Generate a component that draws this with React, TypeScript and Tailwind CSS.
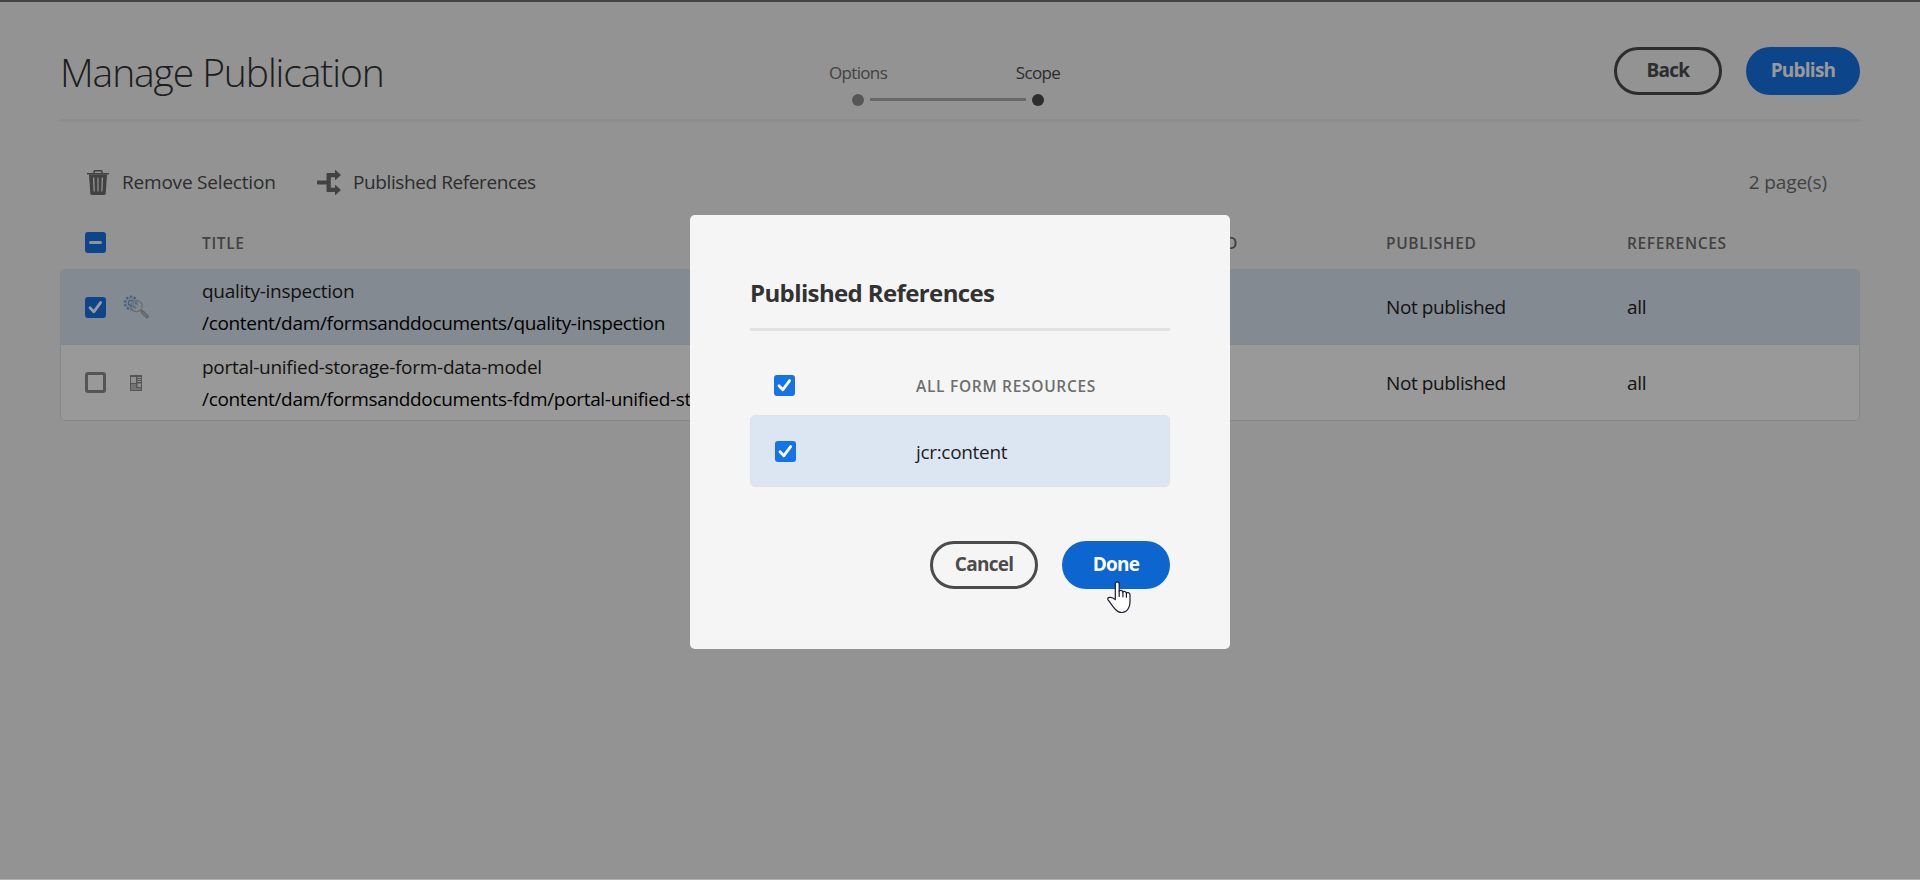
import React from "react";

const rows = [
  {
    title: "quality-inspection",
    path: "/content/dam/formsanddocuments/quality-inspection",
    published: "Not published",
    references: "all",
    selected: true,
  },
  {
    title: "portal-unified-storage-form-data-model",
    path: "/content/dam/formsanddocuments-fdm/portal-unified-storage-form-data-model",
    published: "Not published",
    references: "all",
    selected: false,
  },
];

function Checkbox({ state }: { state: "on" | "off" | "mixed" }) {
  if (state === "off") {
    return <span className="block size-[21px] rounded-[3px] border-3 border-[#8e8e8e]" />;
  }
  return (
    <span className="flex size-[21px] items-center justify-center rounded-[3px] bg-[#1473e6]">
      {state === "mixed" ? (
        <span className="h-[3px] w-[13px] rounded-full bg-[#f5f5f5]" />
      ) : (
        <svg viewBox="0 0 21 21" className="size-[21px]" fill="none">
          <path d="M5 10.8 L8.8 14.8 L15.6 5.6" stroke="white" strokeWidth="2.8" strokeLinecap="round" strokeLinejoin="round" />
        </svg>
      )}
    </span>
  );
}

function TrashIcon() {
  return (
    <svg viewBox="0 0 22 25" className="h-[25px] w-[22px]" fill="#6e6e6e">
      <path d="M0 3h6.3V1.6C6.3.6 7 0 8 0h6c1 0 1.700.6 1.700 1.600V3H22v1.500H0z M7.800 3h6.400V1.500H7.800z" fillRule="evenodd" />
      <path
        d="M2 4.500h18l-1.300 19.100c-.1.800-.6 1.400-1.500 1.400H4.800c-.9 0-1.400-.6-1.500-1.400z M5.900 7.500l.7 14h1.200l-.5-14z M10.400 7.500v14h1.200v-14z M14.700 7.500l-.5 14h1.200l.7-14z"
        fillRule="evenodd"
      />
    </svg>
  );
}

function BranchIcon() {
  return (
    <svg viewBox="0 0 24 25" className="h-[25px] w-6" fill="#6e6e6e">
      <path d="M1 10.500h8.500V4c0-.6.4-1 1-1H18V0.300c0-.3.3-.4.5-.2L24 5l-5.500 5c-.2.200-.5.100-.5-.200V7.200h-4.200v10.600H18v-2.600c0-.3.3-.4.5-.2L24 20l-5.500 4.900c-.2.200-.5.100-.5-.2V22h-7.500c-.6 0-1-.4-1-1v-6.500H1c-.6 0-1-.4-1-1v-2c0-.6.4-1 1-1z" />
    </svg>
  );
}

function InspectIcon() {
  return (
    <svg viewBox="0 0 26 24" className="h-6 w-[26px]" fill="none">
      <circle cx="8" cy="8" r="6.300" stroke="#6f9fd8" strokeWidth="2.200" strokeDasharray="2.200 1.760" />
      <circle cx="8" cy="8" r="5" stroke="#8fb4e0" strokeWidth="0.900" />
      <circle cx="8" cy="8" r="2.600" stroke="#6f9fd8" strokeWidth="1.200" />
      <circle cx="13.500" cy="11" r="5.700" fill="#dce2ea" fillOpacity="0.55" stroke="#b4b8bf" strokeWidth="1.300" />
      <path d="M7.500 10.500 L12.500 12.500 M12.500 7.500 L13.500 10" stroke="#5c93d6" strokeWidth="1.200" strokeDasharray="1.600 1" />
      <path d="M17.500 15 L19.500 17" stroke="#a0a3a8" strokeWidth="1.500" />
      <path d="M19.500 17 L24 21.500" stroke="#a3a6ab" strokeWidth="3.600" strokeLinecap="round" />
      <path d="M19.700 17.200 L23.800 21.300" stroke="#c3c6ca" strokeWidth="1.200" strokeLinecap="round" />
    </svg>
  );
}

function FormIcon() {
  return (
    <svg viewBox="0 0 12 16" className="h-4 w-3">
      <path d="M0 0h12v16H0z" fill="#8e8e8e" />
      <path
        d="M1 2h5v6H1z M7.500 2H11v1H7.500z M7.500 4H11v1H7.500z M7.500 6H11v1H7.500z M7.500 8.500H11V12H7.500z M1 9.500h5v1H1z M1 11.500h5v1H1z M1 13.500h10v1H1z"
        fill="#f2f2f2"
      />
    </svg>
  );
}

function HandCursor() {
  return (
    <svg viewBox="0 0 26 34" className="pointer-events-none absolute top-10 left-[45px] h-[34px] w-[26px]">
      <path
        d="M8.300 3c0-2.800 3.900-2.800 3.900 0v7.200c1.200-1.600 3.300-.8 3.700.9 1.200-1.300 3.100-.7 3.500.9 1.500-1 3.600-.2 3.600 2V21c0 2.500-.5 4.200-1.300 5.800C20.300 29.800 18 31.500 14.700 31.500c-3 0-5-1.600-6.800-3.700C5.500 25 3.500 22 1.200 19.200.5 18.200.6 17 1.600 16.600c2.400-.7 5 .4 6.700 2.100z"
        fill="white"
        stroke="#1b1b2e"
        strokeWidth="1.200"
        strokeLinejoin="round"
      />
      <path d="M12.200 10v5.500 M15.900 11v4.800 M19.400 12v4.200" stroke="#1b1b2e" strokeWidth="1.200" strokeLinecap="round" />
    </svg>
  );
}

export default function App() {
  return (
    <div className="relative h-[880px] w-[1920px] overflow-hidden bg-[#f5f5f5] font-['Open_Sans','Noto_Sans',sans-serif] text-[19px] leading-8 tracking-[-0.32px] text-[#323232]">
      <div className="h-0.5 bg-[#727272]" />
      <div className="px-[60px]">
        <header className="flex h-[120px] items-start justify-between border-b-3 border-[#ececec]">
          <h1 className="w-[740px] pt-[42px] text-[39px] leading-[56px] font-light tracking-[-1.1px]">Manage Publication</h1>
          <div className="flex flex-1 justify-start pt-[57px] text-[17px] leading-7 tracking-[-0.65px]">
            <div className="flex w-[116px] flex-col items-center text-[#6e6e6e]">
              <span>Options</span>
              <span className="mt-[7px] size-3 rounded-full bg-[#909090]" />
            </div>
            <span className="mx-[-46px] mt-[39px] h-[3px] w-[156px] bg-[#b0b0b0]" />
            <div className="flex w-[116px] flex-col items-center text-[#4b4b4b]">
              <span>Scope</span>
              <span className="mt-[7px] size-3 rounded-full bg-[#4b4b4b]" />
            </div>
          </div>
          <div className="flex gap-6 pt-[45px] font-bold tracking-[-0.75px]">
            <button className="h-12 w-[108px] rounded-full border-3 border-[#4b4b4b] pb-0.5 leading-10 text-[#4b4b4b]">Back</button>
            <button className="h-12 w-[114px] rounded-full bg-[#1473e6] pb-0.5 leading-[46px] text-white">Publish</button>
          </div>
        </header>

        <div className="flex items-center pt-11 pr-[33px] pl-[27px]">
          <TrashIcon />
          <span className="ml-[13px] w-[195px] tracking-[-0.2px] text-[#4b4b4b]">Remove Selection</span>
          <BranchIcon />
          <span className="ml-3 flex-1 tracking-[-0.4px] text-[#4b4b4b]">Published References</span>
          <span className="tracking-[-0.1px] text-[#6e6e6e]">2 page(s)</span>
        </div>

        <div className="flex h-[71px] items-center pt-[18px] pl-[25px] text-[15.5px] font-semibold tracking-[0.65px] text-[#6e6e6e]">
          <div className="w-[117px]">
            <Checkbox state="mixed" />
          </div>
          <div className="w-[944px]">TITLE</div>
          <div className="mr-[148px] w-[92px] text-right">MODIFIED</div>
          <div className="w-[241px]">PUBLISHED</div>
          <div>REFERENCES</div>
        </div>

        <div className="divide-y divide-[#e1e1e1] overflow-hidden rounded-[5px] border border-[#e1e1e1]">
          {rows.map((row) => (
            <div key={row.title} className={row.selected ? "flex h-[75px] items-center bg-[#dce6f2] pl-6" : "flex h-[75px] items-center bg-white pl-6"}>
              <div className="w-[38px]">
                <Checkbox state={row.selected ? "on" : "off"} />
              </div>
              <div className="flex w-[26px] justify-center">{row.selected ? <InspectIcon /> : <FormIcon />}</div>
              <div className="ml-[53px] w-[1184px] whitespace-nowrap">
                <p className="tracking-[-0.28px] text-[#1e1e1e]">{row.title}</p>
                <p className="text-black">{row.path}</p>
              </div>
              <div className="w-[241px] tracking-[-0.4px] text-[#1e1e1e]">{row.published}</div>
              <div className="text-[#1e1e1e]">{row.references}</div>
            </div>
          ))}
        </div>
      </div>

      <div className="absolute inset-x-0 top-0 flex h-[879px] items-start justify-center bg-black/40 pt-[215px]">
        <div role="dialog" className="h-[434px] w-[540px] rounded-[5px] bg-[#f5f5f5] px-[60px] pt-[60px] text-[#323232]">
          <h2 className="h-14 border-b-3 border-[#e1e1e1] text-[24px] leading-9 font-bold tracking-[-0.62px]">Published References</h2>
          <div className="mt-[38px] flex h-[46px] items-center pb-[14px] pl-6 text-[15.5px] font-semibold text-[#6e6e6e]">
            <div className="w-[142px]">
              <Checkbox state="on" />
            </div>
            <span className="pt-0.5 tracking-[0.7px]">ALL FORM RESOURCES</span>
          </div>
          <div className="flex h-[72px] items-center rounded-[5px] border border-[#e1e1e1] bg-[#dce6f2] pl-6">
            <div className="w-[141px]">
              <Checkbox state="on" />
            </div>
            <span className="pt-0.5 text-[#1e1e1e]">jcr:content</span>
          </div>
          <div className="mt-[54px] flex justify-end gap-6 font-bold tracking-[-0.75px]">
            <button className="h-12 w-[108px] rounded-full border-3 border-[#4b4b4b] pb-0.5 leading-10 text-[#4b4b4b]">Cancel</button>
            <div className="relative">
              <button className="h-12 w-[108px] rounded-full bg-[#0d66d0] pb-0.5 leading-[46px] text-white">Done</button>
              <HandCursor />
            </div>
          </div>
        </div>
      </div>
      <div className="absolute inset-x-0 bottom-0 h-px bg-[#b0b0b0]" />
    </div>
  );
}
